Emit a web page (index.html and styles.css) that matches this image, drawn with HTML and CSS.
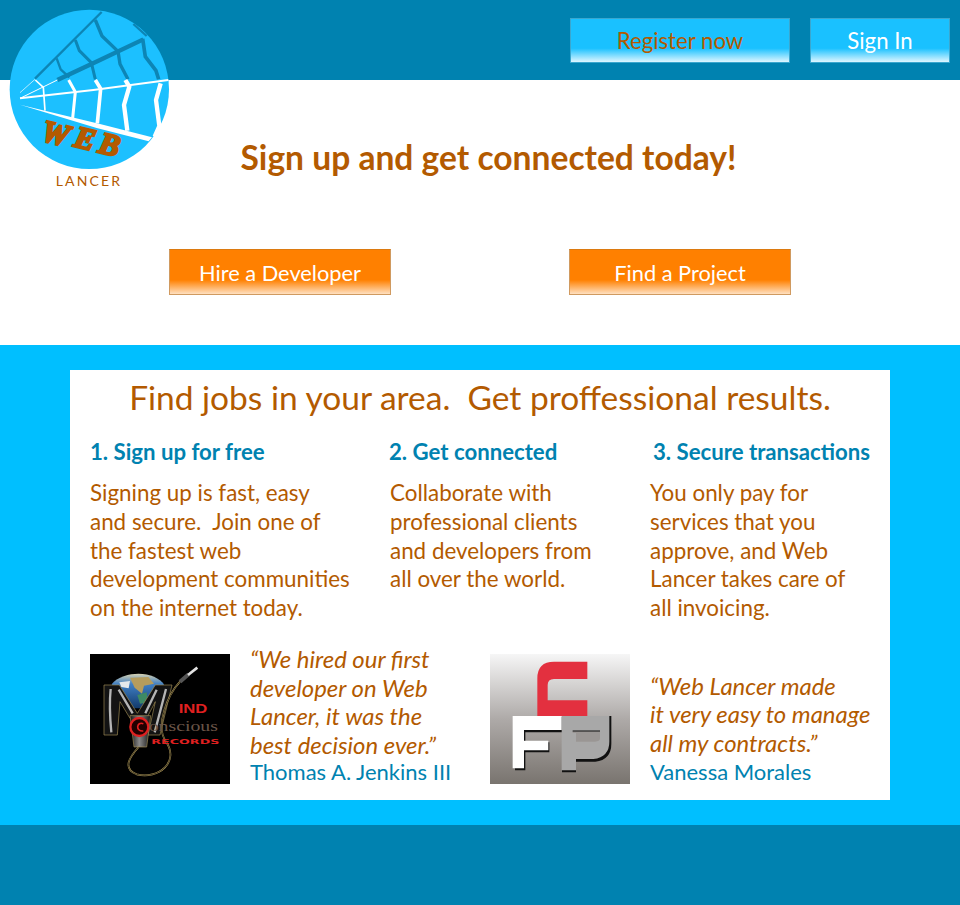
FILE: index.html
```html
<!DOCTYPE html>
<html lang="en">
<head>
    <meta charset="UTF-8">
    <title>Web Lancer</title>
    <link rel="stylesheet" href="styles.css">
</head>
<body>
    <header class="top-bar">
        <a class="btn btn-blue btn-register">Register now</a>
        <a class="btn btn-blue btn-signin">Sign In</a>
    </header>

    <svg class="logo" viewBox="0 0 600 600" role="img" aria-label="Web Lancer">
        <circle cx="268" cy="268" r="239" fill="#1cc0ff"/>
        <g fill="none" stroke="#0d85b5" stroke-linejoin="round">
            <path d="M105 236 L305 36" stroke-width="7"/>
            <path d="M172 240 L300 180 L430 118" stroke-width="13"/>
            <path d="M170 175 L182 208 L208 232" stroke-width="7"/>
            <path d="M226 120 L238 152 L274 188 L286 238" stroke-width="9"/>
            <path d="M286 60 L306 108 L354 154 L360 192 L384 238" stroke-width="10"/>
            <path d="M428 116 L436 170 L468 212 L476 238" stroke-width="11"/>
            <path d="M400 72 L440 108" stroke-width="7"/>
        </g>
        <g fill="none" stroke="#fff" stroke-linejoin="round">
            <path d="M60 278 L105 238" stroke-width="2"/>
            <path d="M60 295 L172 240" stroke-width="3"/>
            <path d="M60 295 L280 270 L505 240" stroke-width="6"/>
            <path d="M106 240 L130 262 L135 332" stroke-width="5"/>
            <path d="M206 240 L226 276 L218 354" stroke-width="9"/>
            <path d="M286 240 L302 266 L292 370" stroke-width="11"/>
            <path d="M376 240 L388 260 L372 315 L382 392" stroke-width="13"/>
            <path d="M482 250 L468 300 L478 378 L464 410" stroke-width="13"/>
        </g>
        <path d="M60 314 L300 372 L456 412 L446 424 L290 384 Z" fill="#fff"/>
        <text class="logo-web" x="120" y="420" transform="rotate(14 120 420)">W</text>
        <text class="logo-web" x="218" y="438" transform="rotate(14 218 438)">E</text>
        <text class="logo-web" x="292" y="456" transform="rotate(14 292 456)">B</text>
        <text class="logo-lancer" x="267" y="558">LANCER</text>
    </svg>

    <section class="hero">
        <h1 class="hero-title">Sign up and get connected today!</h1>
        <div class="hero-actions">
            <a class="btn btn-orange">Hire a Developer</a>
            <a class="btn btn-orange">Find a Project</a>
        </div>
    </section>

    <section class="band">
        <div class="card">
            <h2 class="card-title">Find jobs in your area.&nbsp; Get proffessional results.</h2>
            <div class="steps">
                <div class="step">
                    <h3>1. Sign up for free</h3>
                    <p>Signing up is fast, easy<br>and secure.&nbsp; Join one of<br>the fastest web<br>development communities<br>on the internet today.</p>
                </div>
                <div class="step step-two">
                    <h3>2. Get connected</h3>
                    <p>Collaborate with<br>professional clients<br>and developers from<br>all over the world.</p>
                </div>
                <div class="step step-three">
                    <h3>3. Secure transactions</h3>
                    <p>You only pay for<br>services that you<br>approve, and Web<br>Lancer takes care of<br>all invoicing.</p>
                </div>
            </div>
            <div class="quotes">
                <div class="quote">
                    <svg class="quote-pic" viewBox="30 27 420 390" role="img" aria-label="Mind Conscious Records">
                        <defs>
                            <linearGradient id="earth" x1="0" y1="0" x2="0" y2="1">
                                <stop offset="0" stop-color="#d8d2b0"/>
                                <stop offset="0.3" stop-color="#3f7fc4"/>
                                <stop offset="1" stop-color="#123a6b"/>
                            </linearGradient>
                            <linearGradient id="chrome" x1="0" y1="0" x2="1" y2="0">
                                <stop offset="0" stop-color="#111"/>
                                <stop offset="0.45" stop-color="#8a8a8a"/>
                                <stop offset="1" stop-color="#111"/>
                            </linearGradient>
                        </defs>
                        <rect x="30" y="27" width="420" height="390" fill="#000"/>
                        <path d="M95 118 C110 95 150 86 175 86 C210 86 240 100 252 118 L208 190 L158 190 Z" fill="url(#earth)"/>
                        <path d="M150 98 L205 96 L222 116 L192 122 L186 146 L164 128 Z" fill="#b59c5c"/>
                        <path d="M118 112 L150 108 L146 130 L124 126 Z" fill="#e4e8ea"/>
                        <path d="M172 150 L200 142 L204 172 L180 176 Z" fill="#3d8a64"/>
                        <path d="M72 120 L118 120 L172 205 L226 120 L276 120 L240 270 L204 270 L226 170 L200 220 L150 220 L120 170 L112 270 L72 270 Z" fill="#131313" stroke="#a08d55" stroke-width="2"/>
                        <path d="M92 132 C88 170 90 220 94 262 M116 134 L158 205 M258 132 L224 262 M230 134 L196 205" stroke="#b5b5b5" stroke-width="7" fill="none"/>
                        <path d="M150 212 L212 212 L200 306 L162 306 Z" fill="url(#chrome)" stroke="#a08d55" stroke-width="2"/>
                        <circle cx="178" cy="246" r="27" fill="#200" stroke="#e02020" stroke-width="7"/>
                        <path d="M190 236 C170 228 165 260 190 258" fill="none" stroke="#e02020" stroke-width="5"/>
                        <g fill="none">
                            <path d="M176 306 C150 335 125 370 170 388 C235 405 300 350 258 290 C225 245 262 150 300 110" stroke="#b39c5c" stroke-width="5"/>
                            <path d="M176 306 C150 335 125 370 170 388 C235 405 300 350 258 290 C225 245 262 150 300 110" stroke="#000" stroke-width="2"/>
                            <path d="M300 110 L326 88" stroke="#555" stroke-width="12"/>
                            <path d="M324 90 L352 68" stroke="#e2e2e2" stroke-width="8"/>
                        </g>
                        <text class="rec-ind" x="296" y="204" textLength="86" lengthAdjust="spacingAndGlyphs">IND</text>
                        <text class="rec-conscious" x="206" y="258" textLength="208" lengthAdjust="spacingAndGlyphs">onscious</text>
                        <text class="rec-records" x="214" y="297" textLength="204" lengthAdjust="spacingAndGlyphs">RECORDS</text>
                    </svg>
                    <div class="quote-text">
                        <p>“We hired our first<br>developer on Web<br>Lancer, it was the<br>best decision ever.”</p>
                        <span>Thomas A. Jenkins III</span>
                    </div>
                </div>
                <div class="quote">
                    <svg class="quote-pic" viewBox="30 27 420 390" role="img" aria-label="CFP logo">
                        <defs>
                            <linearGradient id="steel" x1="0" y1="0" x2="0" y2="1">
                                <stop offset="0" stop-color="#f6f6f6"/>
                                <stop offset="0.5" stop-color="#aeaaa8"/>
                                <stop offset="1" stop-color="#79746f"/>
                            </linearGradient>
                        </defs>
                        <rect x="30" y="27" width="420" height="390" fill="url(#steel)"/>
                        <path d="M322 50 L322 102 L222 102 Q203 102 203 120 L203 166 L322 166 L322 213 L172 213 L172 100 Q172 50 222 50 Z" fill="#e3303f"/>
                        <path d="M394 213 L394 296 Q394 344 346 350 L288 350 L288 382 L246 382 L246 265 L360 265 L360 213 Z" fill="#111"/>
                        <path d="M245 213 L388 213 L388 290 Q388 336 340 342 L288 342 L288 376 L245 376 Z" fill="#a8a8a8"/>
                        <path d="M278 258 L360 258 L360 280 Q360 290 345 290 L288 290 L288 264 L278 264 Z" fill="#9a9694"/>
                        <path d="M278 258 L360 258" stroke="#111" stroke-width="3"/>
                        <path d="M105 215 L245 215 L245 262 L136 262 L136 292 L208 292 L208 322 L136 322 L136 376 L105 376 Z" fill="#111"/>
                        <path d="M98 213 L245 213 L245 255 L132 255 L132 287 L205 287 L205 316 L132 316 L132 370 L98 370 Z" fill="#fff"/>
                    </svg>
                    <div class="quote-text quote-text-short">
                        <p>“Web Lancer made<br>it very easy to manage<br>all my contracts.”</p>
                        <span>Vanessa Morales</span>
                    </div>
                </div>
            </div>
        </div>
    </section>

    <footer class="bottom-bar"></footer>
</body>
</html>
```

FILE: styles.css
```css
body {
    margin: 0;
    font-family: 'Lato', 'Open Sans', sans-serif;
    background: #ffffff;
    color: #b35a00;
    position: relative;
}
h1, h2, h3, p {
    margin: 0;
    font-weight: normal;
}
.top-bar {
    height: 80px;
    background: #0082b0;
    display: flex;
    justify-content: flex-end;
    align-items: flex-start;
    gap: 20px;
    padding: 18px 10px 0 0;
    box-sizing: border-box;
}
.btn {
    display: flex;
    align-items: center;
    justify-content: center;
    height: 45px;
    box-sizing: border-box;
    font-size: 22.2px;
}
.btn-blue {
    background: linear-gradient(#1ac1ff 0%, #1ac1ff 68%, #dff6ff 100%);
    border: 1px solid #3aa7cf;
}
.btn-register {
    width: 220px;
    color: #b35a00;
}
.btn-signin {
    width: 140px;
    color: #ffffff;
}
.btn-orange {
    width: 222px;
    height: 46px;
    font-size: 21.8px;
    color: #ffffff;
    background: linear-gradient(#ff8000 0%, #ff8000 68%, #ffe0c0 100%);
    border: 1px solid #d09a60;
    border-top-color: #dc7a10;
}
.logo {
    position: absolute;
    left: 0;
    top: 0;
    width: 200px;
    height: 200px;
}
.logo-web {
    font-family: 'Liberation Serif', serif;
    font-weight: bold;
    font-style: italic;
    font-size: 92px;
    fill: #b35a00;
    stroke: #b35a00;
    stroke-width: 7px;
}
.logo-lancer {
    font-size: 42px;
    letter-spacing: 6.5px;
    fill: #b35a00;
    text-anchor: middle;
}
.hero {
    height: 265px;
    display: flex;
    flex-direction: column;
    align-items: center;
    box-sizing: border-box;
}
.hero-title {
    font-size: 33.6px;
    font-weight: bold;
    line-height: 40px;
    margin-top: 57px;
    padding-left: 17px;
}
.hero-actions {
    display: flex;
    gap: 178px;
    margin-top: 72px;
}
.band {
    background: #00bfff;
    padding: 25px 70px;
}
.card {
    background: #ffffff;
    height: 430px;
    padding: 7px 20px 0;
    box-sizing: border-box;
}
.card-title {
    font-size: 33.5px;
    line-height: 40px;
    text-align: center;
}
.steps {
    display: grid;
    grid-template-columns: 300px 260px 220px;
    margin-top: 21px;
}
.step h3 {
    font-size: 22.2px;
    font-weight: bold;
    line-height: 28px;
    color: #0082b0;
    margin-bottom: 13px;
}
.step p {
    font-size: 22.4px;
    line-height: 28.8px;
}
.step-two h3 {
    margin-left: -1px;
}
.step-three h3 {
    margin-left: 3px;
    white-space: nowrap;
}
.quotes {
    display: grid;
    grid-template-columns: 400px 380px;
    margin-top: 31px;
}
.quote {
    display: flex;
    align-items: flex-start;
    gap: 20px;
}
.quote-pic {
    width: 140px;
    height: 130px;
    flex: none;
}
.quote-text {
    height: 130px;
    display: flex;
    flex-direction: column;
    justify-content: flex-end;
    white-space: nowrap;
}
.quote-text p {
    font-size: 23.9px;
    font-style: italic;
    line-height: 28.8px;
}
.quote-text-short p {
    margin-bottom: 2px;
}
.quote-text span {
    font-size: 22px;
    line-height: 24px;
    color: #0082b0;
}
.rec-ind {
    font-family: 'Liberation Sans', sans-serif;
    font-weight: bold;
    font-size: 36px;
    fill: #e02020;
}
.rec-conscious {
    font-family: 'Liberation Serif', serif;
    font-size: 44px;
    fill: #6b5548;
}
.rec-records {
    font-family: 'DejaVu Sans', sans-serif;
    font-weight: bold;
    font-size: 20px;
    fill: #e02020;
}
.bottom-bar {
    height: 80px;
    background: #0082b0;
}
```
